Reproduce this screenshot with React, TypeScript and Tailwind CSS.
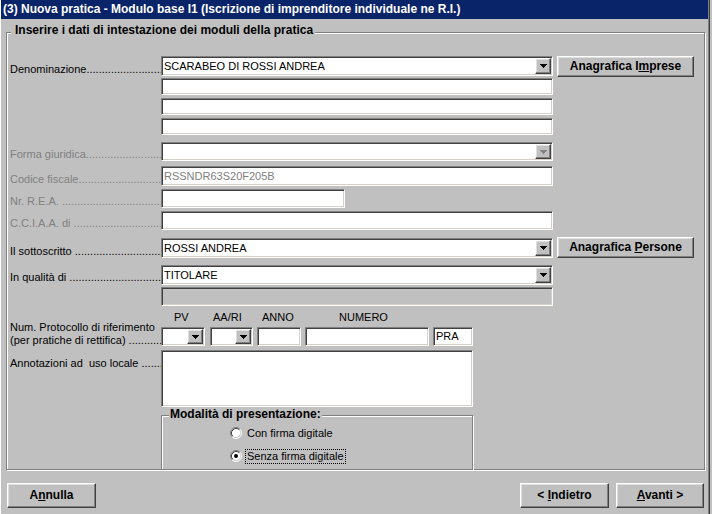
import React from "react";

const sunken =
  "border border-t-[#808080] border-l-[#808080] border-b-white border-r-white shadow-[inset_1px_1px_0_#404040,inset_-1px_-1px_0_#d4d0c8]";
const raised =
  "border border-t-white border-l-white border-b-[#404040] border-r-[#404040] shadow-[inset_-1px_-1px_0_#808080,inset_1px_1px_0_#dfdfdf]";

function Arrow({ disabled = false }: { disabled?: boolean }) {
  const c = disabled ? "#808080" : "#000000";
  return (
    <svg width="7" height="4" viewBox="0 0 7 4" shapeRendering="crispEdges">
      <rect x="0" y="0" width="7" height="1" fill={c} />
      <rect x="1" y="1" width="5" height="1" fill={c} />
      <rect x="2" y="2" width="3" height="1" fill={c} />
      <rect x="3" y="3" width="1" height="1" fill={c} />
    </svg>
  );
}

function Combo({
  className,
  text,
  disabled = false,
}: {
  className: string;
  text?: string;
  disabled?: boolean;
}) {
  return (
    <div className={`${sunken} ${className} bg-white flex items-stretch p-[1px]`}>
      <span className="flex-1 pl-[1px] flex items-center whitespace-nowrap overflow-hidden">
        {text}
      </span>
      <div className={`${raised} w-[16px] bg-[#c0c0c0] flex items-center justify-center`}>
        <Arrow disabled={disabled} />
      </div>
    </div>
  );
}

function Field({
  className,
  text,
  gray = false,
}: {
  className: string;
  text?: string;
  gray?: boolean;
}) {
  return (
    <div
      className={`${sunken} ${className} flex items-center pl-[2px] whitespace-nowrap overflow-hidden ${
        gray ? "text-[#808080]" : ""
      }`}
    >
      {text}
    </div>
  );
}

function Label({
  children,
  disabled = false,
}: {
  children: React.ReactNode;
  disabled?: boolean;
}) {
  return (
    <div
      className={`w-[151px] shrink-0 whitespace-pre overflow-hidden leading-[13px] ${
        disabled ? "text-[#808080]" : "text-black"
      }`}
    >
      {children}
    </div>
  );
}

function Radio({ checked = false }: { checked?: boolean }) {
  return (
    <svg width="12" height="12" viewBox="0 0 12 12">
      <circle cx="6" cy="6" r="4.5" fill="#ffffff" />
      <path d="M2.11 9.89 A5.5 5.5 0 0 1 9.89 2.11" fill="none" stroke="#808080" />
      <path d="M9.89 2.11 A5.5 5.5 0 0 1 2.11 9.89" fill="none" stroke="#ffffff" />
      <path d="M2.82 9.18 A4.5 4.5 0 0 1 9.18 2.82" fill="none" stroke="#404040" />
      <path d="M9.18 2.82 A4.5 4.5 0 0 1 2.82 9.18" fill="none" stroke="#d4d0c8" />
      {checked && <circle cx="6" cy="6" r="2" fill="#000000" />}
    </svg>
  );
}

const dots = "..............................................................";

export default function App() {
  return (
    <div className="w-[712px] h-[514px] overflow-hidden bg-[#c0c0c0] font-['Liberation_Sans',Arial,sans-serif] text-[11px] leading-[13px] text-black flex">
      <div className="w-[708px] h-full border-l border-l-white flex flex-col">
        {/* title bar */}
        <div className="h-[19px] shrink-0 bg-[#0a246a] text-white font-bold text-[12px] flex items-center pl-[2px] whitespace-nowrap">
          (3) Nuova pratica - Modulo base I1 (Iscrizione di imprenditore individuale ne R.I.)
        </div>

        <div className="pl-[5px]">
          {/* main group box */}
          <div className="relative mt-[13px] w-[699px] h-[438px] border border-[#808080] shadow-[1px_1px_0_#ffffff,inset_1px_1px_0_#ffffff]">
            <span className="absolute left-[4px] top-[-9px] bg-[#c0c0c0] pl-[4px] pr-[2px] font-bold text-[12px] whitespace-nowrap">
              Inserire i dati di intestazione dei moduli della pratica
            </span>

            <div className="flex flex-col pl-[3px] pt-[23px]">
              {/* Denominazione */}
              <div className="flex items-start">
                <div className="h-[20px] flex items-end">
                  <Label>Denominazione{dots}</Label>
                </div>
                <Combo className="w-[392px] h-[20px]" text="SCARABEO DI ROSSI ANDREA" />
                <button
                  className={`${raised} ml-[4px] w-[137px] h-[21px] bg-[#c0c0c0] font-bold text-[12px]`}
                >
                  Anagrafica I<span className="underline">m</span>prese
                </button>
              </div>
              <div className="flex mt-[1px] pl-[151px]">
                <Field className="w-[392px] h-[17px] bg-white" />
              </div>
              <div className="flex mt-[3px] pl-[151px]">
                <Field className="w-[392px] h-[17px] bg-white" />
              </div>
              <div className="flex mt-[3px] pl-[151px]">
                <Field className="w-[392px] h-[17px] bg-white" />
              </div>

              {/* Forma giuridica */}
              <div className="flex items-end mt-[7px]">
                <Label disabled>Forma giuridica{dots}</Label>
                <Combo className="w-[392px] h-[19px]" disabled />
              </div>

              {/* Codice fiscale */}
              <div className="flex items-end mt-[5px]">
                <Label disabled>Codice fiscale{dots}</Label>
                <Field className="w-[392px] h-[20px] bg-white" text="RSSNDR63S20F205B" gray />
              </div>

              {/* Nr REA */}
              <div className="flex items-end mt-[3px]">
                <Label disabled>Nr. R.E.A. {dots}</Label>
                <Field className="w-[184px] h-[19px] bg-white" />
              </div>

              {/* CCIAA */}
              <div className="flex items-end mt-[3px]">
                <Label disabled>C.C.I.A.A. di {dots}</Label>
                <Field className="w-[392px] h-[19px] bg-white" />
              </div>

              {/* Il sottoscritto */}
              <div className="flex items-start mt-[7px]">
                <div className="h-[21px] flex items-end">
                  <Label>Il sottoscritto {dots}</Label>
                </div>
                <Combo className="w-[392px] h-[20px] mt-[1px]" text="ROSSI ANDREA" />
                <button
                  className={`${raised} ml-[4px] w-[137px] h-[21px] bg-[#c0c0c0] font-bold text-[12px]`}
                >
                  Anagrafica <span className="underline">P</span>ersone
                </button>
              </div>

              {/* In qualità di */}
              <div className="flex items-end mt-[7px]">
                <div className="pb-[1px]">
                  <Label>In qualità di {dots}</Label>
                </div>
                <Combo className="w-[392px] h-[20px]" text="TITOLARE" />
              </div>
              <div className="flex mt-[2px] pl-[151px]">
                <Field className="w-[392px] h-[19px] bg-[#c0c0c0]" />
              </div>

              {/* Protocollo */}
              <div className="flex mt-[5px]">
                <div className="pt-[10px]">
                  <Label>
                    {"Num. Protocollo di riferimento\n(per pratiche di rettifica) "}
                    {dots}
                  </Label>
                </div>
                <div className="flex flex-col">
                  <div className="flex h-[13px] text-black">
                    <div className="w-[49px] pl-[13px]">PV</div>
                    <div className="w-[47px] pl-[3px]">AA/RI</div>
                    <div className="w-[48px] pl-[5px]">ANNO</div>
                    <div className="w-[128px] pl-[34px]">NUMERO</div>
                  </div>
                  <div className="flex mt-[3px]">
                    <Combo className="w-[44px] h-[19px]" />
                    <Combo className="w-[43px] h-[19px] ml-[5px]" />
                    <Field className="w-[44px] h-[19px] ml-[4px] bg-white" />
                    <Field className="w-[124px] h-[19px] ml-[4px] bg-white" />
                    <Field className="w-[40px] h-[19px] ml-[4px] bg-white" text="PRA" />
                  </div>
                </div>
              </div>

              {/* Annotazioni */}
              <div className="flex items-start mt-[3px]">
                <div className="pt-[7px]">
                  <Label>Annotazioni ad  uso locale {dots}</Label>
                </div>
                <Field className="w-[312px] h-[57px] bg-white" />
              </div>

              {/* Modalità di presentazione */}
              <div className="flex mt-[8px] pl-[151px]">
                <div className="relative w-[312px] h-[55px] border border-[#808080] shadow-[1px_1px_0_#ffffff,inset_1px_1px_0_#ffffff]">
                  <span className="absolute left-[7px] top-[-8px] bg-[#c0c0c0] px-[1px] font-bold text-[12px] whitespace-nowrap">
                    Modalità di presentazione:
                  </span>
                  <div className="flex flex-col pl-[68px] pt-[10px] gap-[9px]">
                    <div className="flex items-center h-[14px]">
                      <Radio />
                      <span className="ml-[3px] px-[1px] border border-transparent">
                        Con firma digitale
                      </span>
                    </div>
                    <div className="flex items-center h-[14px]">
                      <Radio checked />
                      <span className="ml-[3px] px-[1px] border border-dotted border-black">
                        Senza firma digitale
                      </span>
                    </div>
                  </div>
                </div>
              </div>
            </div>
          </div>

          {/* footer */}
          <div className="flex items-start mt-[13px] pl-[1px] w-[698px]">
            <button className={`${raised} w-[89px] h-[25px] bg-[#c0c0c0] font-bold text-[12px]`}>
              A<span className="underline">n</span>nulla
            </button>
            <div className="flex-1" />
            <button className={`${raised} w-[89px] h-[25px] bg-[#c0c0c0] font-bold text-[12px]`}>
              &lt; <span className="underline">I</span>ndietro
            </button>
            <button
              className={`${raised} ml-[7px] w-[88px] h-[25px] bg-[#c0c0c0] font-bold text-[12px]`}
            >
              <span className="underline">A</span>vanti &gt;
            </button>
          </div>
        </div>
      </div>
      {/* right window frame */}
      <div className="w-[1px] h-full bg-[#808080]" />
      <div className="w-[1px] h-full bg-[#404040]" />
    </div>
  );
}
